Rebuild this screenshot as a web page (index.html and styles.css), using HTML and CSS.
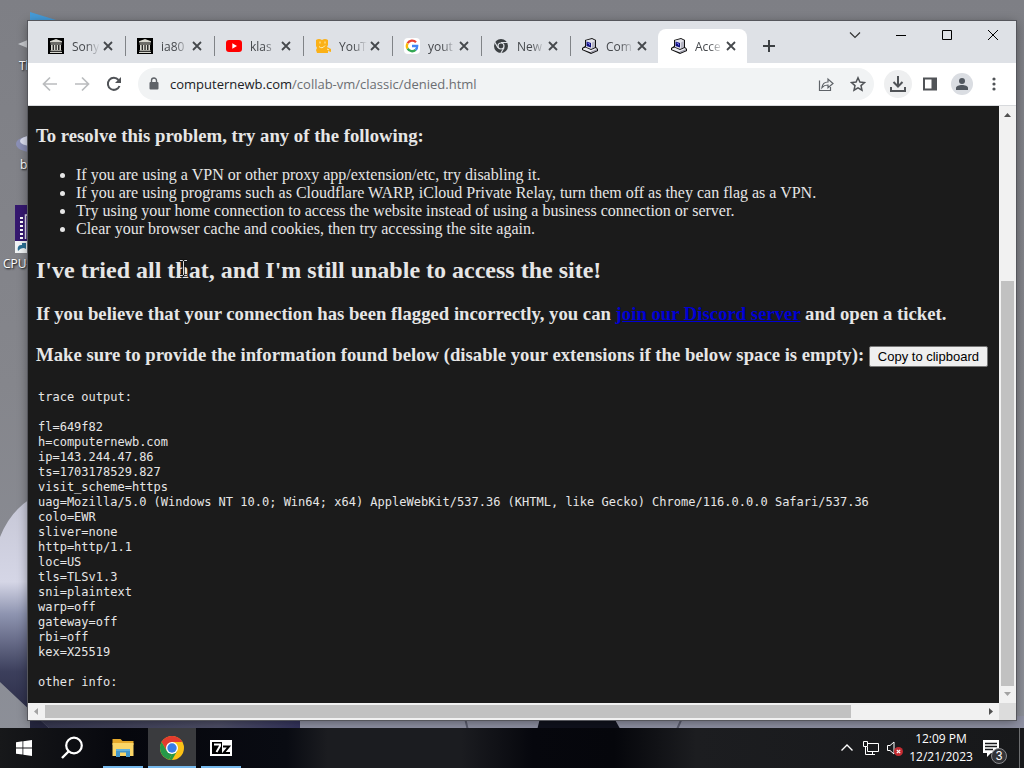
FILE: index.html
```
<!DOCTYPE html>
<html lang="en-US">

<head>
	<title>Access denied</title>

	<meta charset="utf-8">

	<!-- Mobile Screen Resizing -->
	<meta name="viewport" content="width=device-width, initial-scale=1.0">

	<link rel="stylesheet" href="styles.css">
</head>

<body>

	<!-- Shared icons -->
	<svg class="sprite" aria-hidden="true">
		<symbol id="close" viewBox="0 0 16 16">
			<path d="M4 4l8 8M12 4l-8 8" fill="none" stroke="#45484c" stroke-width="1.8" />
		</symbol>
		<symbol id="archive" viewBox="0 0 16 16">
			<path d="M0 0h16v16H0z" fill="#000" />
			<path d="M8 1l6 2.300v1.200H2V3.300zM2.500 5.500h11v1h-11zM3 7h1.700v5H3zm2.800 0h1.700v5H5.800zm2.800 0h1.600v5H8.600zm2.800 0H13v5h-1.600zM2.500 12.300h11v.9h-11zM2 14h12v1H2z" fill="#d8d8d0" />
		</symbol>
		<symbol id="computer" viewBox="0 0 16 16">
			<path d="M3 2l7-2 4 2v7l2 2v2l-7 3-9-4v-2l3-2z" fill="#111" />
			<path d="M4 2.500L10 1l3 1.500V9l-4 2-5-2z" fill="#e2e2ea" />
			<path d="M4.500 3.500L9 5v4.500L4.500 8z" fill="#101080" />
			<path d="M10 4.500l3-1.500v6l-3 1.500z" fill="#b5b5c2" />
			<path d="M1 10.500L3.500 9.500 9 12l4.500-2 1.500 1v1l-6 2.500-8-3z" fill="#ececf2" />
			<path d="M9 13.500l6-2.500v1.500L9 15z" fill="#9a9aa8" />
			<path d="M5.500 5l2 .7v1.500" fill="none" stroke="#7777ec" />
		</symbol>
	</svg>

	<main class="desktop">

		<!-- Wallpaper -->
		<svg class="wallpaper" viewBox="0 0 1024 768" preserveAspectRatio="none" aria-hidden="true">
			<defs>
				<linearGradient id="sky" x1="0" y1="0" x2="0" y2="1">
					<stop offset="0" stop-color="#7e7f85" />
					<stop offset=".5" stop-color="#85868c" />
					<stop offset="1" stop-color="#8d9099" />
				</linearGradient>
				<linearGradient id="sleeve" x1="0" y1="0" x2="0" y2="1">
					<stop offset="0" stop-color="#c6c7d6" />
					<stop offset=".36" stop-color="#d5d6e6" />
					<stop offset=".5" stop-color="#8e94b0" />
					<stop offset=".75" stop-color="#3c3f5c" />
					<stop offset="1" stop-color="#25263f" />
				</linearGradient>
				<linearGradient id="floor" x1="0" y1="0" x2="1" y2="0">
					<stop offset="0" stop-color="#35364f" />
					<stop offset=".7" stop-color="#4d4e66" />
					<stop offset="1" stop-color="#33335c" />
				</linearGradient>
			</defs>
			<path d="M0 0h1024v768H0z" fill="url(#sky)" />
			<path d="M0 537q10-25 30-38v230h20L0 682z" fill="url(#sleeve)" />
			<path d="M28 708h272v60H90z" fill="url(#floor)" />
			<path d="M300 716h724v52H300z" fill="#8f91a3" />
			<path d="M540 718h74l28 50H528z" fill="#10121d" />
			<path d="M682 718l-22 50M465 718l12 50" stroke="#5b5d6e" stroke-width="2" />
		</svg>

		<!-- Desktop shortcuts, partly behind the window -->
		<svg class="shortcut shortcut-flag" viewBox="0 0 28 36" aria-hidden="true">
			<path d="M2 0l26 8v3H2z" fill="#459bd8" />
			<path d="M-10 32l12-5v10z" fill="#c9cbd0" />
		</svg>
		<svg class="shortcut shortcut-bin" viewBox="0 0 32 24" aria-hidden="true">
			<ellipse cx="16" cy="12" rx="16" ry="8" fill="#8a8fb5" />
			<ellipse cx="15" cy="9" rx="11" ry="5" fill="#dcdff0" />
		</svg>
		<svg class="shortcut shortcut-cpu" viewBox="0 0 32 48" aria-hidden="true">
			<path d="M0 0h32v48H0z" fill="#35186f" />
			<path d="M5 12h3v2H5zm0 4h3v2H5zm0 4h3v2H5zm0 4h3v2H5zm0 4h3v2H5zm0 4h3v2H5z" fill="#fff" />
			<path d="M10.500 34V10H24" fill="none" stroke="#e4def1" stroke-width="1.500" />
			<path d="M0 36h12v12H0z" fill="#f1f4f6" />
			<path d="M3 46c-1-5 1-6 4-6v-2h4v6l-2-1c-3 0-4 1-6 3z" fill="#2b6f94" />
		</svg>
		<span class="label label-one">Th</span>
		<span class="label label-two">bi</span>
		<span class="label label-three">CPU-Z</span>

		<section class="window">

			<!-- Tabs -->
			<header class="titlebar">
				<nav class="tabs">
					<div class="tab">
						<svg class="icon"><use href="#archive" /></svg>
						<span class="tab-title">Sony</span>
						<button class="btn-unstyled" aria-label="Close tab"><svg class="icon"><use href="#close" /></svg></button>
					</div>
					<div class="tab">
						<svg class="icon"><use href="#archive" /></svg>
						<span class="tab-title">ia80</span>
						<button class="btn-unstyled" aria-label="Close tab"><svg class="icon"><use href="#close" /></svg></button>
					</div>
					<div class="tab">
						<svg class="icon" viewBox="0 0 16 16">
							<rect y="2" width="16" height="12" rx="3" fill="#f00" />
							<path d="M6.300 5.200v5.600L11 8z" fill="#fff" />
						</svg>
						<span class="tab-title">klas</span>
						<button class="btn-unstyled" aria-label="Close tab"><svg class="icon"><use href="#close" /></svg></button>
					</div>
					<div class="tab">
						<svg class="icon" viewBox="0 0 16 16">
							<path d="M1 2q3-2 6 0 3-2 6 0v5l-1 2 4 2v3l-3-1v2H2l-1-3 1-2-1-2z" fill="#fbb117" />
							<path d="M5 3.500v2M10 3.500v2M4 8.500q3 3 6-1M12 11l2 1" fill="none" stroke="#fff0b5" />
						</svg>
						<span class="tab-title">YouT</span>
						<button class="btn-unstyled" aria-label="Close tab"><svg class="icon"><use href="#close" /></svg></button>
					</div>
					<div class="tab">
						<svg class="icon" viewBox="0 0 16 16">
							<rect width="16" height="16" rx="4" fill="#fff" />
							<g fill="none" stroke-width="2.300">
								<path d="M12 4.200A5.200 5.200 0 0 0 3.600 5.300" stroke="#ea4335" />
								<path d="M3.600 5.300a5.200 5.200 0 0 0 0 5.400" stroke="#fbbc05" />
								<path d="M3.600 10.700a5.200 5.200 0 0 0 8 1.200" stroke="#34a853" />
								<path d="M11.600 11.900A5.200 5.200 0 0 0 13.200 8H8" stroke="#4285f4" />
							</g>
						</svg>
						<span class="tab-title">yout</span>
						<button class="btn-unstyled" aria-label="Close tab"><svg class="icon"><use href="#close" /></svg></button>
					</div>
					<div class="tab">
						<svg class="icon" viewBox="0 0 16 16">
							<circle cx="8" cy="8" r="7" fill="#3c4043" />
							<path d="M8 4.500h6.500M5 9.700L1.800 4.200M11 9.700L7.900 15" stroke="#dee1e6" stroke-width="1.200" />
							<circle cx="8" cy="8" r="3.600" fill="#dee1e6" />
							<circle cx="8" cy="8" r="2.400" fill="#3c4043" />
						</svg>
						<span class="tab-title">New</span>
						<button class="btn-unstyled" aria-label="Close tab"><svg class="icon"><use href="#close" /></svg></button>
					</div>
					<div class="tab tab-last">
						<svg class="icon"><use href="#computer" /></svg>
						<span class="tab-title">Com</span>
						<button class="btn-unstyled" aria-label="Close tab"><svg class="icon"><use href="#close" /></svg></button>
					</div>
					<div class="tab tab-active">
						<svg class="icon"><use href="#computer" /></svg>
						<span class="tab-title">Acce</span>
						<button class="btn-unstyled" aria-label="Close tab"><svg class="icon"><use href="#close" /></svg></button>
					</div>
					<button class="btn-unstyled new-tab" aria-label="New tab">
						<svg class="icon" viewBox="0 0 16 16">
							<path d="M8 2v12M2 8h12" stroke="#3c4043" stroke-width="2" />
						</svg>
					</button>
				</nav>
				<div class="window-buttons">
					<button class="btn-unstyled" aria-label="Search tabs">
						<svg class="icon" viewBox="0 0 16 16"><path d="M3 5.500l5 5 5-5" fill="none" stroke="#333" stroke-width="1.200" /></svg>
					</button>
					<button class="btn-unstyled" aria-label="Minimize">
						<svg class="icon" viewBox="0 0 16 16"><path d="M3 8.500h10" stroke="#000" /></svg>
					</button>
					<button class="btn-unstyled" aria-label="Maximize">
						<svg class="icon" viewBox="0 0 16 16"><path d="M3.500 3.500h9v9h-9z" fill="none" stroke="#000" /></svg>
					</button>
					<button class="btn-unstyled" aria-label="Close">
						<svg class="icon" viewBox="0 0 16 16"><path d="M3 3l10 10M13 3L3 13" stroke="#000" /></svg>
					</button>
				</div>
			</header>

			<!-- Toolbar -->
			<div class="toolbar">
				<button class="btn-unstyled" aria-label="Back">
					<svg class="icon" viewBox="0 0 16 16"><path d="M15 8H2M8 1.500L1.500 8 8 14.500" fill="none" stroke="#babcbe" stroke-width="1.700" /></svg>
				</button>
				<button class="btn-unstyled" aria-label="Forward">
					<svg class="icon" viewBox="0 0 16 16"><path d="M1 8h13M8 1.500L14.500 8 8 14.500" fill="none" stroke="#babcbe" stroke-width="1.700" /></svg>
				</button>
				<button class="btn-unstyled" aria-label="Reload">
					<svg class="icon" viewBox="0 0 16 16">
						<path d="M13.500 10A6 6 0 1 1 12.500 4" fill="none" stroke="#505357" stroke-width="2" />
						<path d="M15 1v6H9z" fill="#505357" />
					</svg>
				</button>
				<div class="omnibox">
					<svg class="icon" viewBox="0 0 16 16">
						<path d="M4.500 6h7a1 1 0 0 1 1 1v5.500a1 1 0 0 1-1 1h-7a1 1 0 0 1-1-1V7a1 1 0 0 1 1-1z" fill="#5f6368" />
						<path d="M5.500 7V4.500a2.500 2.500 0 0 1 5 0V7" fill="none" stroke="#5f6368" stroke-width="1.400" />
					</svg>
					<span class="url"><span class="url-host">computernewb.com</span>/collab-vm/classic/denied.html</span>
					<button class="btn-unstyled" aria-label="Share">
						<svg class="icon" viewBox="0 0 16 16"><path d="M1.500 4.500v10h11V11M4 11.500c.5-4 3-5.500 6-5.500V3l5 4.500-5 4.200V9c-3 0-4.500.7-6 2.500z" fill="none" stroke="#5f6368" stroke-width="1.200" /></svg>
					</button>
					<button class="btn-unstyled" aria-label="Bookmark">
						<svg class="icon" viewBox="0 0 16 16"><path d="M8 1.800l1.900 4.300 4.600.4-3.500 3.100 1 4.600-4-2.400-4 2.400 1-4.600L1.500 6.500l4.600-.4z" fill="none" stroke="#505357" stroke-width="1.500" /></svg>
					</button>
				</div>
				<button class="btn-unstyled round" aria-label="Downloads">
					<svg class="icon" viewBox="0 0 16 16"><path d="M8 0v10M3.500 6L8 10.500 12.500 6M1 11v4h14v-4" fill="none" stroke="#505357" stroke-width="2" /></svg>
				</button>
				<button class="btn-unstyled" aria-label="Side panel">
					<svg class="icon" viewBox="0 0 16 16"><path d="M2 2.500h12v11H2z" fill="none" stroke="#505357" stroke-width="2" /><path d="M9.500 2H15v12H9.500z" fill="#505357" /></svg>
				</button>
				<button class="btn-unstyled round avatar" aria-label="Profile">
					<svg class="icon" viewBox="0 0 16 16"><circle cx="8" cy="5" r="3" fill="#50565e" /><path d="M2 14v-2c0-2 3-3 6-3s6 1 6 3v2z" fill="#50565e" /></svg>
				</button>
				<button class="btn-unstyled" aria-label="Menu">
					<svg class="icon" viewBox="0 0 16 16" fill="#505357"><circle cx="8" cy="3" r="1.600" /><circle cx="8" cy="8" r="1.600" /><circle cx="8" cy="13" r="1.600" /></svg>
				</button>
			</div>

			<!-- Page -->
			<div class="viewport">
				<article class="page">
					<h3>To resolve this problem, try any of the following:</h3>
					<ul>
						<li>If you are using a VPN or other proxy app/extension/etc, try disabling it.</li>
						<li>If you are using programs such as Cloudflare WARP, iCloud Private Relay, turn them off as they can flag as a VPN.</li>
						<li>Try using your home connection to access the website instead of using a business connection or server.</li>
						<li>Clear your browser cache and cookies, then try accessing the site again.</li>
					</ul>
					<h2>I've tried all that, and I'm still unable to access the site!</h2>
					<h3>If you believe that your connection has been flagged incorrectly, you can <a href="#">join our Discord server</a> and open a ticket.</h3>
					<h3>Make sure to provide the information found below (disable your extensions if the below space is empty): <button class="btn">Copy to clipboard</button></h3>
					<pre>trace output:

fl=649f82
h=computernewb.com
ip=143.244.47.86
ts=1703178529.827
visit_scheme=https
uag=Mozilla/5.0 (Windows NT 10.0; Win64; x64) AppleWebKit/537.36 (KHTML, like Gecko) Chrome/116.0.0.0 Safari/537.36
colo=EWR
sliver=none
http=http/1.1
loc=US
tls=TLSv1.3
sni=plaintext
warp=off
gateway=off
rbi=off
kex=X25519

other info:</pre>
				</article>
				<div class="scroll scroll-y">
					<svg class="arrow" viewBox="0 0 17 17"><path d="M5 11h7L8.500 7z" fill="#505050" /></svg>
					<div class="track"><div class="thumb"></div></div>
					<svg class="arrow" viewBox="0 0 17 17"><path d="M5 6h7l-3.500 4z" fill="#a3a3a3" /></svg>
				</div>
				<div class="scroll scroll-x">
					<svg class="arrow" viewBox="0 0 17 17"><path d="M10 5v7L6 8.500z" fill="#a3a3a3" /></svg>
					<div class="track"><div class="thumb"></div></div>
					<svg class="arrow" viewBox="0 0 17 17"><path d="M7 5v7l4-3.500z" fill="#505050" /></svg>
				</div>
				<div class="corner"></div>
			</div>
		</section>

		<!-- Mouse pointer -->
		<svg class="pointer" viewBox="0 0 9 18" aria-hidden="true">
			<path d="M1 1.500h2.500l1 1 1-1H8M4.500 2.500v13M1 16.500h2.500l1-1 1 1H8" fill="none" stroke="#111" stroke-width="2.500" />
			<path d="M1 1.500h2.500l1 1 1-1H8M4.500 2.500v13M1 16.500h2.500l1-1 1 1H8" fill="none" stroke="#ddd" />
		</svg>
	</main>

	<!-- Taskbar -->
	<footer class="taskbar">
		<div class="launch">
			<button class="btn-unstyled task" aria-label="Start">
				<svg class="icon" viewBox="0 0 16 16"><path d="M0 2.300L6.500 1.300v6.200H0zM7.300 1.200L16 0v7.500H7.300zM0 8.400h6.500v6.200L0 13.700zM7.300 8.400H16V16l-8.700-1.200z" fill="#fff" /></svg>
			</button>
			<button class="btn-unstyled task" aria-label="Search">
				<svg class="icon-large" viewBox="0 0 24 24"><circle cx="14" cy="9.500" r="7.800" fill="none" stroke="#fff" stroke-width="2.200" /><path d="M8.500 15.500L2 22" stroke="#fff" stroke-width="2.400" /></svg>
			</button>
		</div>
		<div class="running">
			<button class="btn-unstyled task task-open" aria-label="File Explorer">
				<svg class="icon-large" viewBox="0 0 24 24">
					<path d="M1.500 3h8l2 2h11v4h-21z" fill="#e6a92b" />
					<path d="M1.500 7h21v13h-21z" fill="#fbd667" />
					<path d="M5 13h14v8h-4v-4.500H9V21H5z" fill="#4296c9" />
					<path d="M5 13h14v2H5z" fill="#63b1da" />
				</svg>
			</button>
			<button class="btn-unstyled task task-open task-current" aria-label="Google Chrome">
				<svg class="icon-large" viewBox="0 0 24 24">
					<circle cx="12" cy="12" r="12" fill="#fbc116" />
					<path d="M12 12L1.600 6A12 12 0 0 1 22.400 6H12z" fill="#e33b2e" />
					<path d="M1.600 6l5.200 9L12 12V6z" fill="#e33b2e" />
					<path d="M1.600 6l5.200 9 5.200 3-3 5.600A12 12 0 0 1 1.600 6z" fill="#269848" />
					<path d="M9 23.600A12 12 0 0 0 12 24l5.200-9L12 18z" fill="#269848" />
					<circle cx="12" cy="12" r="6" fill="#fff" />
					<circle cx="12" cy="12" r="4.700" fill="#387de8" />
				</svg>
			</button>
			<button class="btn-unstyled task task-open" aria-label="7-Zip">
				<svg class="icon-large" viewBox="0 0 24 24">
					<path d="M1 4h22v16H1z" fill="#fff" />
					<path d="M3 6h10v12H3z" fill="#000" />
					<path d="M5 8.500h6v1.500L7.500 16" fill="none" stroke="#fff" stroke-width="2" />
					<path d="M14 10.500h6L14.500 17H21" fill="none" stroke="#000" stroke-width="2" />
				</svg>
			</button>
		</div>

		<div class="tray">
			<button class="btn-unstyled" aria-label="Show hidden icons">
				<svg class="icon" viewBox="0 0 16 16"><path d="M2.500 10.500L8 5l5.500 5.500" fill="none" stroke="#fff" stroke-width="1.400" /></svg>
			</button>
			<button class="btn-unstyled" aria-label="Network">
				<svg class="icon" viewBox="0 0 16 16"><path d="M5 3.500h10.500v8H4.500V7M.5 1.500h4v5h-4zM2.500 6.500v8H12M9.500 11.500v3" fill="none" stroke="#fff" /></svg>
			</button>
			<button class="btn-unstyled" aria-label="Volume muted">
				<svg class="icon" viewBox="0 0 16 16"><path d="M.5 5.500H3L7 2v12L3 10.500H.5z" fill="none" stroke="#fff" /><circle cx="11.500" cy="11.500" r="4.500" fill="#c42b31" /><path d="M9.800 9.800l3.400 3.400M13.200 9.800l-3.400 3.400" stroke="#fff" stroke-width="1.200" /></svg>
			</button>
			<div class="clock">
				<time>12:09 PM</time>
				<time>12/21/2023</time>
			</div>
			<button class="btn-unstyled notices" aria-label="Notifications">
				<svg class="icon-large" viewBox="0 0 24 24"><path d="M4 4h16v13h-8l-4 4v-4H4z" fill="#fff" /><path d="M6 7.500h12M6 10.500h12M6 13.500h8" stroke="#17181b" stroke-width="1.300" /></svg>
				<span class="badge">3</span>
			</button>
		</div>
	</footer>

</body>

</html>
```
FILE: styles.css
```
/**
 * Add box sizing to everything
 */
*,
*:before,
*:after {
	box-sizing: border-box;
}

/**
 * Layout
 */
body {
	display: flex;
	flex-direction: column;
	font-family: "Open Sans", "Noto Sans", sans-serif;
	font-size: 12px;
	height: 100vh;
	margin: 0;
	overflow: hidden;
}

.sprite {
	display: none;
}

.icon,
.icon-large {
	display: block;
	flex: none;
	height: 16px;
	width: 16px;
}

.icon-large {
	height: 24px;
	width: 24px;
}

.desktop {
	display: flex;
	flex: 1;
	min-height: 0;
	padding: 21px 8px 8px 28px;
	position: relative;
}

.wallpaper {
	height: 100vh;
	left: 0;
	position: absolute;
	top: 0;
	width: 100%;
}

/**
 * Buttons
 */
.btn-unstyled {
	align-items: center;
	background-color: transparent;
	border: 0;
	display: flex;
	flex: none;
	justify-content: center;
	padding: 0;
}

.btn {
	background-color: #efefef;
	border: 1px solid #767676;
	border-radius: 2px;
	color: #000;
	font-family: "Liberation Sans", sans-serif;
	font-size: 13px;
	height: 21px;
	line-height: 15px;
	padding: 1px 8px;
}

/**
 * Desktop shortcuts
 */
.shortcut,
.label {
	position: absolute;
}

.shortcut-flag {
	height: 36px;
	left: 28px;
	overflow: visible;
	top: 12px;
	width: 28px;
}

.shortcut-bin {
	height: 24px;
	left: 16px;
	top: 132px;
	width: 32px;
}

.shortcut-cpu {
	height: 48px;
	left: 15px;
	top: 205px;
	width: 32px;
}

.label {
	color: #fff;
	line-height: 16px;
	text-shadow: 1px 1px 2px #000;
}

.label-one {
	left: 19px;
	top: 58px;
}

.label-two {
	left: 20px;
	top: 157px;
}

.label-three {
	left: 3px;
	top: 256px;
}

/**
 * Browser window
 */
.window {
	background-color: #fff;
	box-shadow: 0 0 0 1px #55565c, 0 2px 10px rgba(0, 0, 0, 0.4);
	display: flex;
	flex: 1;
	flex-direction: column;
	min-width: 0;
	position: relative;
}

.titlebar {
	background-color: #dee1e6;
	display: flex;
	height: 42px;
	justify-content: space-between;
}

.tabs {
	align-items: flex-end;
	display: flex;
	padding-left: 7px;
}

.tab {
	align-items: center;
	color: #45484c;
	display: flex;
	height: 34px;
	padding-left: 13px;
	position: relative;
	width: 89px;
}

.tab:after {
	background-color: #808387;
	content: "";
	height: 20px;
	position: absolute;
	right: -2px;
	top: 7px;
	width: 1px;
}

.tab-last:after,
.tab-active:after {
	display: none;
}

.tab-active {
	background-color: #fff;
	border-radius: 8px 8px 0 0;
}

.tab-title {
	-webkit-mask-image: linear-gradient(to right, #000 50%, transparent);
	mask-image: linear-gradient(to right, #000 50%, transparent);
	margin-left: 8px;
	white-space: nowrap;
	width: 28px;
}

.new-tab {
	align-self: flex-end;
	height: 34px;
	margin-left: 14px;
}

.window-buttons {
	display: flex;
	height: 28px;
}

.window-buttons button {
	width: 46px;
}

.toolbar {
	align-items: center;
	border-bottom: 1px solid #d8dadd;
	display: flex;
	gap: 16px;
	height: 43px;
	padding: 0 14px;
}

.omnibox {
	align-items: center;
	background-color: #f1f3f4;
	border-radius: 16px;
	color: #6b6e72;
	display: flex;
	flex: 1;
	font-size: 13px;
	gap: 16px;
	height: 32px;
	min-width: 0;
	padding: 0 8px;
}

.url {
	flex: 1;
	margin-left: -8px;
	overflow: hidden;
	white-space: nowrap;
}

.url-host {
	color: #202124;
}

.round {
	background-color: #eeeff0;
	border-radius: 50%;
	height: 28px;
	margin: 0 -6px;
	width: 28px;
}

.avatar {
	background-color: #dadde2;
	height: 22px;
	margin: 0 -3px;
	width: 22px;
}

/**
 * Page
 */
.viewport {
	display: grid;
	flex: 1;
	grid-template-columns: minmax(0, 1fr) 17px;
	grid-template-rows: minmax(0, 1fr) 17px;
	min-height: 0;
}

.page {
	background-color: #1b1b1b;
	color: #e6e6e6;
	font-family: "Liberation Serif", serif;
	font-size: 16px;
	line-height: 18px;
	overflow: hidden;
	padding: 19px 8px 0;
	white-space: nowrap;
}

.page h2,
.page h3 {
	line-height: 22px;
	margin: 0 0 19px;
}

.page h2 {
	line-height: 28px;
}

.page ul {
	margin: 0 0 18px;
	padding-left: 40px;
}

.page a {
	color: #0000d4;
}

.page pre {
	font-family: "DejaVu Sans Mono", monospace;
	font-size: 12px;
	line-height: 15px;
	margin: 0;
	padding: 4px 2px;
}

.scroll {
	background-color: #f1f1f1;
	display: flex;
}

.scroll-y {
	flex-direction: column;
}

.arrow {
	flex: none;
	height: 17px;
	width: 17px;
}

.track {
	display: flex;
	flex: 1;
}

.scroll-y .track {
	align-items: flex-end;
	padding: 0 2px;
}

.scroll-x .track {
	padding: 2px 0;
}

.thumb {
	background-color: #c1c1c1;
}

.scroll-y .thumb {
	height: 72%;
	width: 100%;
}

.scroll-x .thumb {
	width: 86%;
}

.corner {
	background-color: #dcdcdc;
}

.pointer {
	height: 18px;
	left: 179px;
	position: absolute;
	top: 259px;
	width: 9px;
}

/**
 * Taskbar
 */
.taskbar {
	background: linear-gradient(to right, #17181a 0, #06070d 12%, #090b12 28%, #1b1c20 32%, #1b1c20 45%, #06070d 52%, #05060b 60%, #1c1d20 68%, #17181a 100%);
	color: #fff;
	display: flex;
	flex: none;
	gap: 3px;
	height: 40px;
	position: relative;
}

.launch,
.running {
	display: flex;
}

.running {
	gap: 1px;
}

.task {
	position: relative;
	width: 48px;
}

.task-open:after {
	background-color: #76b9ed;
	bottom: 0;
	content: "";
	height: 2px;
	left: 4px;
	position: absolute;
	right: 4px;
}

.task-current {
	background-color: #3a3b3e;
}

.task-current:after {
	left: 0;
	right: 0;
}

.tray {
	align-items: center;
	border-right: 1px solid #6d6e70;
	display: flex;
	gap: 8px;
	margin-left: auto;
	margin-right: 4px;
	padding-right: 16px;
}

.clock {
	align-items: center;
	display: flex;
	flex-direction: column;
	line-height: 18px;
	white-space: nowrap;
	width: 60px;
}

.notices {
	position: relative;
}

.badge {
	background-color: #333438;
	border: 1px solid #8a8b8e;
	border-radius: 50%;
	bottom: -4px;
	color: #fff;
	font-size: 12px;
	height: 16px;
	line-height: 14px;
	position: absolute;
	right: -4px;
	text-align: center;
	width: 16px;
}
```
